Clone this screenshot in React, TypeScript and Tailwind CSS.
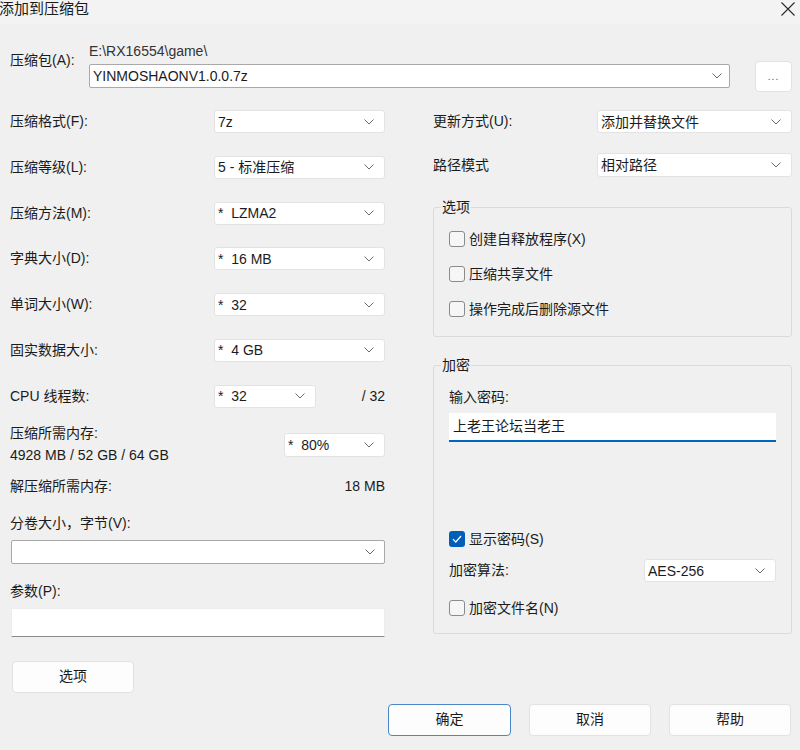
import React from "react";

const FONT = '"Liberation Sans", "Noto Sans CJK SC", sans-serif';

function Chevron() {
  return (
    <svg width="10" height="6" viewBox="0 0 10 6" className="shrink-0">
      <path d="M0.5 0.5 L5 5 L9.5 0.5" fill="none" stroke="#6a6a6a" strokeWidth="1" />
    </svg>
  );
}

function Select({
  value,
  className = "",
}: {
  value: string;
  className?: string;
}) {
  return (
    <div
      className={`flex items-center justify-between bg-white border border-[#e3e3e3] rounded-[3px] pl-[3px] pr-[10px] ${className}`}
    >
      <span className="whitespace-pre leading-none">{value}</span>
      <Chevron />
    </div>
  );
}

function SelectRow({ label, value }: { label: string; value: string }) {
  return (
    <div className="flex items-center justify-between h-[23px]">
      <span>{label}</span>
      <Select value={value} className="w-[171px] h-[23px]" />
    </div>
  );
}

function Checkbox({ checked = false, label }: { checked?: boolean; label: string }) {
  return (
    <div className="flex items-center h-[20px] gap-[4px]">
      {checked ? (
        <div className="w-[16px] h-[16px] rounded-[3px] bg-[#005fb8] flex items-center justify-center">
          <svg width="10" height="8" viewBox="0 0 10 8">
            <path d="M1 4.2 L3.8 7 L9 1" fill="none" stroke="#ffffff" strokeWidth="1.2" />
          </svg>
        </div>
      ) : (
        <div className="w-[16px] h-[16px] rounded-[3px] border border-[#8a8a8a] bg-[#f6f6f6]" />
      )}
      <span>{label}</span>
    </div>
  );
}

function Group({
  title,
  className = "",
  children,
}: {
  title: string;
  className?: string;
  children: React.ReactNode;
}) {
  return (
    <div className={`relative border border-[#dadada] rounded-[3px] ${className}`}>
      <span className="absolute left-[7px] top-[-11px] leading-[20px] bg-[#f0f0f0] px-[1px]">
        {title}
      </span>
      {children}
    </div>
  );
}

function Button({ label, primary = false, className = "" }: { label: string; primary?: boolean; className?: string }) {
  return (
    <div
      className={`flex items-center justify-center bg-[#fdfdfd] rounded-[4px] border ${
        primary ? "border-[#4a86c8]" : "border-[#e2e2e2]"
      } ${className}`}
    >
      {label}
    </div>
  );
}

export default function App() {
  return (
    <div
      className="w-[800px] h-[750px] bg-[#f0f0f0] text-[14px] text-[#1b1b1b] overflow-hidden"
      style={{ fontFamily: FONT }}
    >
      {/* title bar */}
      <div className="h-[24px] bg-[#f3f3f3] flex items-start justify-between">
        <span className="text-[15px] leading-[18px] -ml-[1px]">添加到压缩包</span>
        <svg width="16" height="16" viewBox="0 0 16 16" className="mt-[1px] mr-[4px]">
          <path d="M1.5 1.5 L14.5 14.5 M14.5 1.5 L1.5 14.5" stroke="#2a2a2a" strokeWidth="1.1" />
        </svg>
      </div>

      <div className="pl-[10px] pr-[8px]">
        {/* archive path */}
        <div className="flex items-start mt-[17px]">
          <span className="w-[79px] mt-[9px] leading-[20px]">压缩包(A):</span>
          <div className="w-[641px] flex flex-col">
            <span className="leading-[20px] text-[#333]">E:\RX16554\game\</span>
            <div className="mt-[3px] h-[24px] bg-white border border-[#a9a9a9] rounded-[2px] flex items-center justify-between pl-[3px] pr-[7px]">
              <span className="leading-none">YINMOSHAONV1.0.0.7z</span>
              <Chevron />
            </div>
          </div>
          <div className="ml-[25px] mt-[20px] w-[37px] h-[31px] bg-white border border-[#e2e2e2] rounded-[4px] flex items-end justify-center pb-[9px]">
            <span className="text-[10px] leading-none text-[#555] tracking-[1px]">...</span>
          </div>
        </div>

        {/* two columns */}
        <div className="flex mt-[18px] gap-[48px]">
          {/* left column */}
          <div className="w-[375px] flex flex-col">
            <div className="flex flex-col gap-[22.8px]">
              <SelectRow label="压缩格式(F):" value="7z" />
              <SelectRow label="压缩等级(L):" value="5 - 标准压缩" />
              <SelectRow label="压缩方法(M):" value="*  LZMA2" />
              <SelectRow label="字典大小(D):" value="*  16 MB" />
              <SelectRow label="单词大小(W):" value="*  32" />
              <SelectRow label="固实数据大小:" value="*  4 GB" />
              <div className="flex items-center h-[23px]">
                <span className="w-[204px]">CPU 线程数:</span>
                <Select value="*  32" className="w-[102px] h-[23px]" />
                <span className="ml-auto">/ 32</span>
              </div>
            </div>

            <div className="flex justify-between mt-[14px]">
              <div className="flex flex-col leading-[22px]">
                <span>压缩所需内存:</span>
                <span>4928 MB / 52 GB / 64 GB</span>
              </div>
              <Select value="*  80%" className="w-[101px] h-[24px] mt-[11px]" />
            </div>

            <div className="flex justify-between leading-[20px] mt-[10px]">
              <span>解压缩所需内存:</span>
              <span>18 MB</span>
            </div>

            <span className="leading-[20px] mt-[17px]">分卷大小，字节(V):</span>
            <div className="mt-[7px] h-[24px] bg-white border border-[#a9a9a9] rounded-[2px] flex items-center justify-end pr-[9px] ml-[1px]">
              <Chevron />
            </div>

            <span className="leading-[20px] mt-[17px]">参数(P):</span>
            <div className="mt-[7px] h-[29px] bg-white border border-[#ececec] border-b-[#8a8a8a] rounded-t-[2px] ml-[1px]" />

            <Button label="选项" className="mt-[24px] ml-[2px] w-[122px] h-[32px]" />
          </div>

          {/* right column */}
          <div className="w-[359px] flex flex-col">
            <div className="flex items-center justify-between h-[23px]">
              <span>更新方式(U):</span>
              <Select value="添加并替换文件" className="w-[195px] h-[23px]" />
            </div>
            <div className="flex items-center justify-between h-[24px] mt-[20px]">
              <span>路径模式</span>
              <Select value="相对路径" className="w-[195px] h-[24px]" />
            </div>

            <Group title="选项" className="mt-[30px] h-[130px] pl-[15px] pt-[21px]">
              <div className="flex flex-col gap-[15px]">
                <Checkbox label="创建自释放程序(X)" />
                <Checkbox label="压缩共享文件" />
                <Checkbox label="操作完成后删除源文件" />
              </div>
            </Group>

            <Group title="加密" className="mt-[28px] h-[269px] px-[15px] pt-[21px]">
              <div className="flex flex-col">
                <span className="leading-[20px]">输入密码:</span>
                <div className="mt-[6px] h-[29px] bg-white border-b-2 border-[#0067c0] flex items-center pl-[4px]">
                  <span>上老王论坛当老王</span>
                </div>
                <div className="mt-[87px]">
                  <Checkbox checked label="显示密码(S)" />
                </div>
                <div className="flex items-center justify-between h-[23px] mt-[10px]">
                  <span>加密算法:</span>
                  <Select value="AES-256" className="w-[132px] h-[23px]" />
                </div>
                <div className="mt-[16px]">
                  <Checkbox label="加密文件名(N)" />
                </div>
              </div>
            </Group>
          </div>
        </div>

        {/* dialog buttons */}
        <div className="flex justify-end gap-[18px] mt-[11px] pr-[1px]">
          <Button label="确定" primary className="w-[123px] h-[32px]" />
          <Button label="取消" className="w-[122px] h-[32px]" />
          <Button label="帮助" className="w-[122px] h-[32px]" />
        </div>
      </div>
    </div>
  );
}
